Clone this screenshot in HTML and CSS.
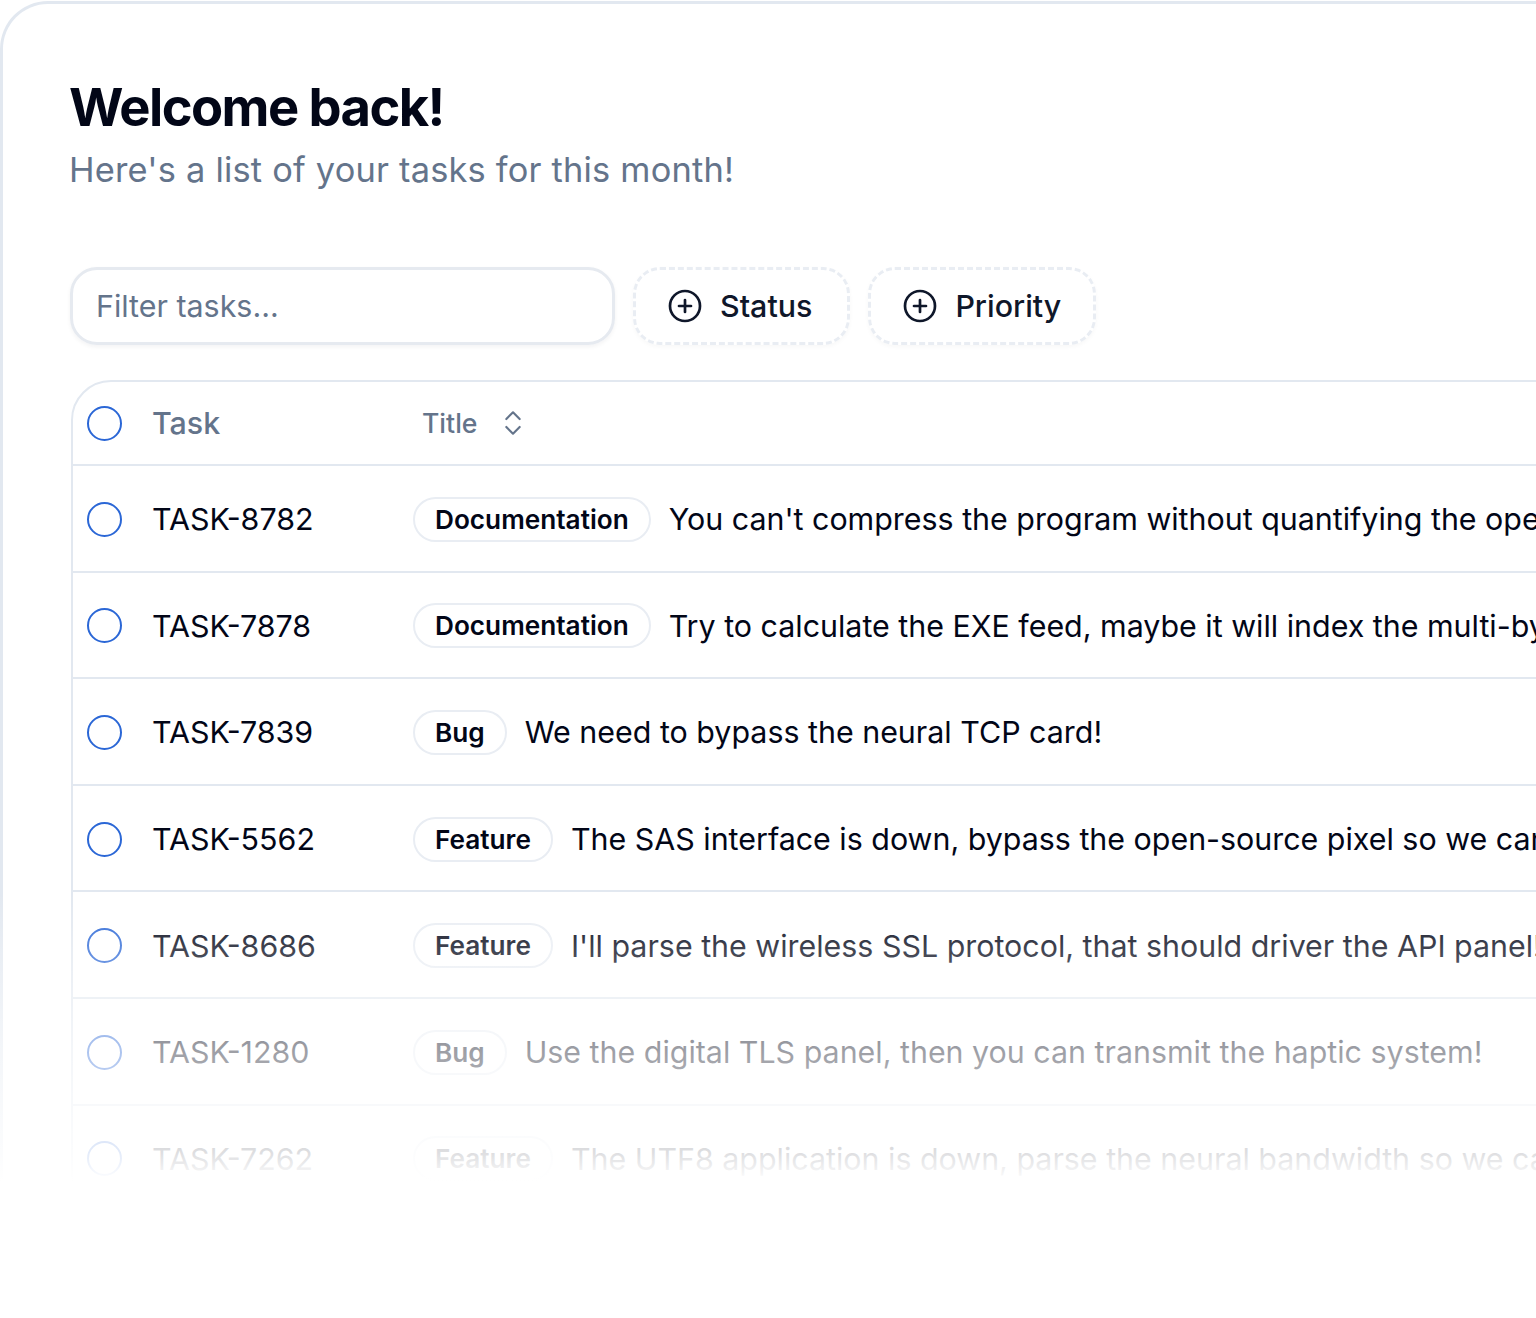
FILE: index.html
```html
<!DOCTYPE html>
<html lang="en">
<head>
<meta charset="utf-8">
<title>Tasks</title>
<link rel="stylesheet" href="styles.css">
</head>
<body>
<div class="stage">
<main class="card">
  <h1 class="title">Welcome back!</h1>
  <p class="subtitle">Here's a list of your tasks for this month!</p>
  <div class="toolbar">
    <div class="filter">Filter tasks...</div>
    <div class="facet facet-status">
      <svg class="icon" viewBox="0 0 24 24"><circle cx="12" cy="12" r="10"/><path d="M8 12h8"/><path d="M12 8v8"/></svg>
      <span>Status</span>
    </div>
    <div class="facet facet-priority">
      <svg class="icon" viewBox="0 0 24 24"><circle cx="12" cy="12" r="10"/><path d="M8 12h8"/><path d="M12 8v8"/></svg>
      <span>Priority</span>
    </div>
  </div>
  <section class="table">
    <div class="row head">
      <span class="check"></span>
      <span class="id">Task</span>
      <span class="col-title">Title
        <svg class="sort" viewBox="0 0 24 24"><path d="m7 15 5 5 5-5"/><path d="m7 9 5-5 5 5"/></svg>
      </span>
    </div>
    <div class="row">
      <span class="check"></span><span class="id">TASK-8782</span>
      <div class="cell"><span class="badge">Documentation</span><span class="text">You can't compress the program without quantifying the open-source SSD pixel!</span></div>
    </div>
    <div class="row">
      <span class="check"></span><span class="id">TASK-7878</span>
      <div class="cell"><span class="badge">Documentation</span><span class="text">Try to calculate the EXE feed, maybe it will index the multi-byte pixel!</span></div>
    </div>
    <div class="row">
      <span class="check"></span><span class="id">TASK-7839</span>
      <div class="cell"><span class="badge">Bug</span><span class="text">We need to bypass the neural TCP card!</span></div>
    </div>
    <div class="row">
      <span class="check"></span><span class="id">TASK-5562</span>
      <div class="cell"><span class="badge">Feature</span><span class="text">The SAS interface is down, bypass the open-source pixel so we can back up the PNG bandwidth!</span></div>
    </div>
    <div class="row">
      <span class="check"></span><span class="id">TASK-8686</span>
      <div class="cell"><span class="badge">Feature</span><span class="text">I'll parse the wireless SSL protocol, that should driver the API panel!</span></div>
    </div>
    <div class="row">
      <span class="check"></span><span class="id">TASK-1280</span>
      <div class="cell"><span class="badge">Bug</span><span class="text">Use the digital TLS panel, then you can transmit the haptic system!</span></div>
    </div>
    <div class="row">
      <span class="check"></span><span class="id">TASK-7262</span>
      <div class="cell"><span class="badge">Feature</span><span class="text">The UTF8 application is down, parse the neural bandwidth so we can back up the PNG firewall!</span></div>
    </div>
  </section>
</main>
<div class="fade"></div>
</div>
</body>
</html>
```
FILE: styles.css
```css
* { box-sizing: border-box; }
html, body { margin: 0; height: 100%; background: #fff; overflow: hidden; }
body { font-family: Inter, "Liberation Sans", sans-serif; color: #020617; }

.stage {
  position: relative;
  height: 1182px;
  padding-top: 1px;
  overflow: hidden;
}

.card {
  width: 1800px;
  height: 1181px;
  overflow: hidden;
  border: 3px solid #e2e8f0;
  border-bottom: 0;
  border-top-left-radius: 48px;
  padding: 71px 0 0 67px;
}

.title {
  margin: 0 0 0 -1px;
  font-size: 52.5px;
  line-height: 64px;
  font-weight: 700;
  letter-spacing: -0.03em;
  color: #020617;
}
.subtitle {
  margin: 0 0 0 -1px;
  font-size: 34.4px;
  line-height: 62px;
  letter-spacing: 0.2px;
  color: #64748b;
}

.toolbar {
  display: flex;
  gap: 18px;
  margin-top: 66px;
}
.filter {
  width: 545px;
  height: 78px;
  padding: 0 0 1px 23px;
  display: flex;
  align-items: center;
  border: 3px solid #e6eaf0;
  border-radius: 27px;
  box-shadow: 0 2px 4px rgba(15, 23, 42, 0.05);
  font-size: 30.4px;
  color: #64748b;
}
.facet {
  height: 78px;
  padding: 0 33px 1px 31px;
  display: flex;
  align-items: center;
  gap: 17px;
  border: 3px dashed #e9edf3;
  border-radius: 27px;
  box-shadow: 0 2px 4px rgba(15, 23, 42, 0.03);
  font-size: 30.4px;
  font-weight: 500;
  color: #0f172a;
}
.facet-status { padding-right: 35px; }
.facet-priority { padding-right: 32px; }
.icon {
  width: 36px;
  height: 36px;
  fill: none;
  stroke: #0f172a;
  stroke-width: 1.8;
  stroke-linecap: round;
}

.table {
  margin-top: 35px;
  margin-left: 1px;
  width: 1700px;
  border: 2px solid #e2e8f0;
  border-top-left-radius: 40px;
}
.row {
  height: 106.6px;
  padding: 2px 0 0 14px;
  display: flex;
  align-items: center;
  border-top: 2px solid #e2e8f0;
}
.row.head {
  height: 82px;
  padding-top: 0;
  border-top: 0;
}
.check {
  flex: none;
  width: 35px;
  height: 35px;
  border: 2.5px solid #2b67d6;
  border-radius: 50%;
}
.id {
  flex: none;
  width: 291px;
  padding-left: 30px;
  font-size: 30.4px;
  color: #020617;
}
.head .id {
  font-weight: 500;
  color: #64748b;
}
.col-title {
  display: flex;
  align-items: center;
  gap: 20px;
  padding-left: 9px;
  font-size: 26.6px;
  font-weight: 500;
  color: #64748b;
}
.sort {
  width: 32px;
  height: 32px;
  fill: none;
  stroke: #64748b;
  stroke-width: 1.6;
  stroke-linecap: round;
  stroke-linejoin: round;
}
.cell {
  display: flex;
  align-items: center;
  gap: 18px;
  white-space: nowrap;
}
.badge {
  height: 45px;
  padding: 0 20px;
  display: flex;
  align-items: center;
  border: 2.5px solid #e9edf3;
  border-radius: 24px;
  font-size: 26.2px;
  font-weight: 600;
  color: #020617;
}
.text {
  font-size: 30.4px;
  color: #020617;
}

.fade {
  position: absolute;
  left: 0;
  right: 0;
  bottom: 0;
  height: 290px;
  background: linear-gradient(to bottom,
    rgba(255,255,255,0) 0%,
    rgba(255,255,255,0.25) 20%,
    rgba(255,255,255,0.6) 53%,
    rgba(255,255,255,0.87) 90%,
    rgba(255,255,255,1) 100%);
}
```
